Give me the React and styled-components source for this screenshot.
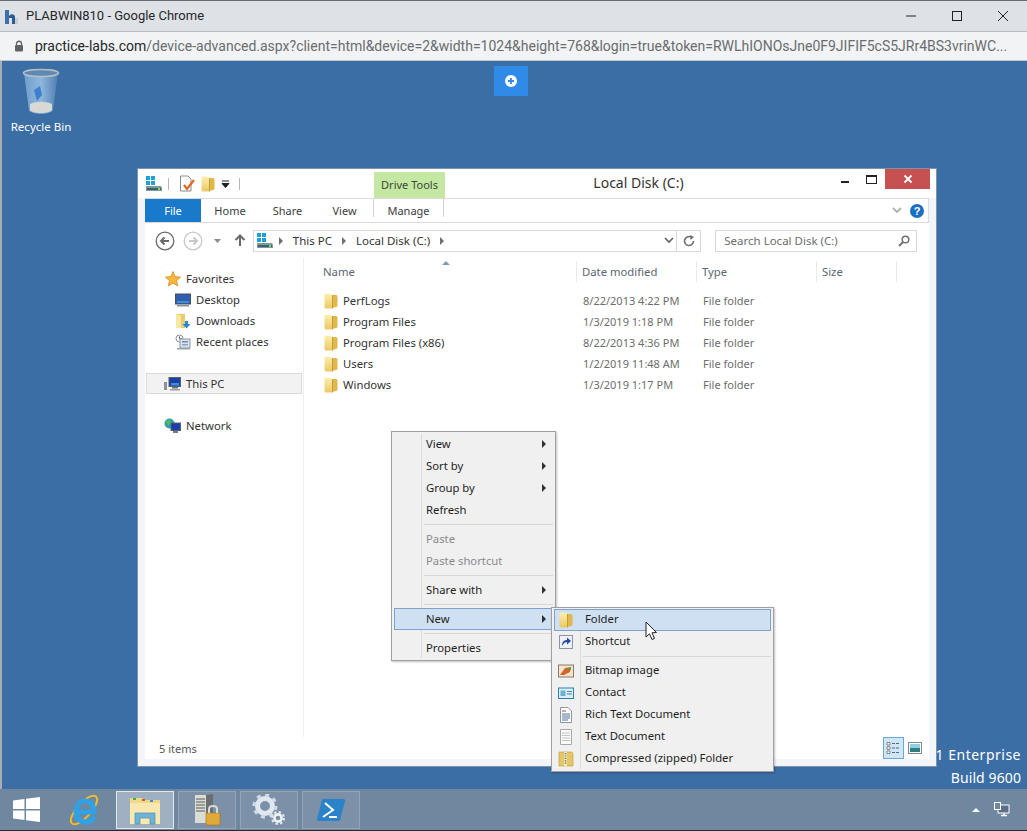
import styled, { createGlobalStyle } from "styled-components";

// Global styles

const GlobalStyle = createGlobalStyle`
    html, body {
        margin: 0;
        padding: 0;
        background: #ffffff;
        overflow: hidden;
    }
    * {
        box-sizing: border-box;
    }
`;

const FONT = `"Noto Sans", "Open Sans", sans-serif`;

// Browser chrome

const Page = styled.div`
    width: 1027px;
    height: 831px;
    display: flex;
    flex-direction: column;
    font-family: ${FONT};
    font-size: 12px;
    color: #2a2a2a;
    border-top: 1px solid #6a6d70;
`;

const BrowserTitleBar = styled.div`
    height: 31px;
    flex: none;
    background: #dee1e6;
    display: flex;
    align-items: center;
    padding-left: 4px;
    font-family: "Roboto", sans-serif;
    font-size: 13px;
    color: #26282b;
    gap: 6px;
    border-bottom: 1px solid #b9bcc0;
`;

const BrowserTitle = styled.span`
    flex: 1;
    padding-bottom: 2px;
`;

const BrowserControls = styled.div`
    display: flex;
    align-items: center;
    height: 100%;
    padding-right: 1px;
`;

const BrowserControl = styled.div`
    width: 46px;
    height: 100%;
    display: flex;
    align-items: center;
    justify-content: center;
`;

const UrlBar = styled.div`
    height: 29px;
    flex: none;
    background: #f1f3f4;
    display: flex;
    align-items: center;
    padding-left: 14px;
    gap: 11px;
    font-family: "Roboto", sans-serif;
    font-size: 14px;
    color: #6a6d70;
    white-space: nowrap;
    overflow: hidden;
    border-bottom: 1px solid #c4c6c8;
`;

const UrlHost = styled.span`
    color: #26282b;
`;

// Desktop

const Desktop = styled.div`
    flex: 1;
    position: relative;
    background: #3b6ea5;
    border-left: 2px solid #a9adb2;
`;

const RecycleBin = styled.div`
    position: absolute;
    left: 5px;
    top: 7px;
    width: 68px;
    display: flex;
    flex-direction: column;
    align-items: center;
    gap: 3px;
    color: #ffffff;
    font-size: 11.5px;
`;

const RemoteButton = styled.div`
    position: absolute;
    left: 492px;
    top: 5px;
    width: 34px;
    height: 30px;
    background: #2f8ae8;
    display: flex;
    align-items: center;
    justify-content: center;
`;

const Watermark = styled.div`
    position: absolute;
    right: 6px;
    bottom: 0;
    height: 46px;
    display: flex;
    flex-direction: column;
    align-items: flex-end;
    color: #ffffff;
    font-size: 14px;
    line-height: 23px;
`;

const WatermarkLine = styled.span`
    letter-spacing: ${(p) => p.$spacing}px;
`;

// Explorer window

const ExplorerWindow = styled.div`
    position: absolute;
    left: 135px;
    top: 107px;
    width: 800px;
    height: 599px;
    display: flex;
    flex-direction: column;
    background: #f2f6fb;
    border: 1px solid #7e93aa;
    padding: 0 7px 7px;
`;

const TitleRow = styled.div`
    height: 29px;
    flex: none;
    display: flex;
    align-items: flex-start;
    background: #ffffff;
    margin: 0 -7px;
    padding-left: 7px;
`;

const QuickAccess = styled.div`
    width: 229px;
    height: 100%;
    display: flex;
    align-items: center;
    gap: 5px;
`;

const QuickSep = styled.div`
    width: 1px;
    height: 12px;
    background: #b4b4b4;
    margin-left: ${(p) => p.$left || 0}px;
    margin-right: ${(p) => p.$right || 0}px;
`;

const DriveToolsLabel = styled.div`
    width: 71px;
    height: 26px;
    margin-top: 3px;
    padding-bottom: 2px;
    background: #c4e8a3;
    color: #3a4a30;
    font-size: 11px;
    display: flex;
    align-items: center;
    justify-content: center;
`;

const WindowTitle = styled.div`
    flex: 1;
    height: 100%;
    text-align: center;
    font-size: 14px;
    line-height: 27px;
    color: #333333;
`;

const WindowButtons = styled.div`
    display: flex;
    align-items: flex-start;
    height: 21px;
    padding-right: 6px;
`;

const WindowButton = styled.div`
    width: ${(p) => p.$width}px;
    height: 20px;
    display: flex;
    align-items: center;
    justify-content: center;
    background: ${(p) => p.$bg || "transparent"};
`;

const Ribbon = styled.div`
    height: 25px;
    flex: none;
    display: flex;
    align-items: stretch;
    background: #ffffff;
    border: 1px solid #dadbdc;
    border-left: none;
    position: relative;
`;

const FileTab = styled.div`
    width: 56px;
    background: #1979ca;
    color: #ffffff;
    font-size: 11px;
    display: flex;
    align-items: center;
    justify-content: center;
`;

const RibbonTab = styled.div`
    width: ${(p) => p.$width}px;
    display: flex;
    align-items: center;
    justify-content: center;
    font-size: 11px;
    color: #3c3c3c;
    ${(p) => p.$context && `
        border-left: 1px solid #d0d5cc;
        border-right: 1px solid #d0d5cc;
        margin-bottom: 6px;
        padding-top: 5px;
        height: 18px;
    `}
`;

const RibbonRight = styled.div`
    flex: 1;
    display: flex;
    align-items: center;
    justify-content: flex-end;
    gap: 8px;
    padding-right: 4px;
`;

const NavRow = styled.div`
    height: 35px;
    flex: none;
    display: flex;
    align-items: center;
    background: #ffffff;
    padding: 0 12px 0 10px;
`;

const NavButtons = styled.div`
    width: 98px;
    display: flex;
    align-items: center;
`;

const AddressBox = styled.div`
    width: 449px;
    height: 22px;
    display: flex;
    align-items: center;
    border: 1px solid #d9d9d9;
    padding-left: 2px;
    color: #333333;
    font-size: 11.5px;
`;

const Crumb = styled.span`
    margin: 0 10px;
`;

const AddressEnd = styled.div`
    margin-left: auto;
    display: flex;
    align-items: center;
    height: 100%;
`;

const AddressAction = styled.div`
    width: ${(p) => p.$width}px;
    height: 100%;
    display: flex;
    align-items: center;
    justify-content: center;
    border-left: ${(p) => (p.$divided ? "1px solid #d9d9d9" : "none")};
`;

const Caret = styled.span`
    width: 0;
    height: 0;
    margin-left: ${(p) => p.$left || 0}px;
    border-top: 4px solid transparent;
    border-bottom: 4px solid transparent;
    border-left: 4px solid #707070;
    display: inline-block;
    flex: none;
`;

const SearchBox = styled.div`
    width: 202px;
    height: 22px;
    margin-left: 14px;
    display: flex;
    align-items: center;
    justify-content: space-between;
    border: 1px solid #d9d9d9;
    padding: 0 6px 0 8px;
    color: #6d6d6d;
    font-size: 11.5px;
`;

const Body = styled.div`
    flex: 1;
    min-height: 0;
    display: flex;
    background: #ffffff;
`;

const NavPane = styled.div`
    width: 159px;
    flex: none;
    padding: 10px 1px 0;
    border-right: 1px solid #eeeeee;
`;

const TreeRow = styled.div`
    height: 21px;
    display: flex;
    align-items: center;
    gap: 5px;
    padding-left: ${(p) => p.$indent}px;
    color: #333333;
    font-size: 11.3px;
    margin-bottom: ${(p) => (p.$gap ? 21 : 0)}px;
    background: ${(p) => (p.$selected ? "#f2f2f2" : "transparent")};
    border: ${(p) => (p.$selected ? "1px solid #d9d9d9" : "none")};
`;

const FilePane = styled.div`
    flex: 1;
    min-width: 0;
    padding: 3px 0 0 14px;
`;

const COLUMNS = "259px 120px 120px 80px";

const HeaderRow = styled.div`
    height: 21px;
    display: grid;
    grid-template-columns: ${COLUMNS};
    margin-bottom: 8px;
    position: relative;
`;

const HeaderCell = styled.div`
    display: flex;
    align-items: center;
    padding-left: 5px;
    color: #5a6675;
    font-size: 11.3px;
    border-right: 1px solid #eaeaea;
`;

const SortArrow = styled.span`
    position: absolute;
    left: 124px;
    top: 0;
    width: 0;
    height: 0;
    border-left: 4px solid transparent;
    border-right: 4px solid transparent;
    border-bottom: 4px solid #7f9db9;
`;

const FileRow = styled.div`
    height: 21px;
    display: grid;
    grid-template-columns: ${COLUMNS};
    align-items: center;
`;

const FileName = styled.div`
    display: flex;
    align-items: center;
    gap: 4px;
    padding-left: 5px;
    color: #333333;
    font-size: 11.3px;
`;

const FileMeta = styled.div`
    padding-left: 6px;
    color: #6d6d6d;
    font-size: 11px;
`;

const StatusBar = styled.div`
    height: 22px;
    flex: none;
    background: #ffffff;
    display: flex;
    align-items: center;
    justify-content: space-between;
    padding: 0 4px 0 14px;
    font-size: 11px;
    color: #555555;
`;

const ViewToggles = styled.div`
    display: flex;
    align-items: center;
`;

const ViewToggle = styled.div`
    width: 21px;
    height: 22px;
    display: flex;
    align-items: center;
    justify-content: center;
    background: ${(p) => (p.$active ? "#cfe6f7" : "transparent")};
    border: 1px solid ${(p) => (p.$active ? "#6fa8d0" : "transparent")};
`;

// Context menus

const Menu = styled.div`
    position: absolute;
    left: ${(p) => p.$left}px;
    top: ${(p) => p.$top}px;
    width: ${(p) => p.$width}px;
    background: #f0f0f0;
    border: 1px solid #a0a0a0;
    padding: 1px 2px;
    box-shadow: 1px 1px 2px rgba(0, 0, 0, 0.25);
    font-size: 11.3px;
`;

const MenuGutter = styled.div`
    position: absolute;
    left: ${(p) => p.$left}px;
    top: 2px;
    bottom: 2px;
    width: 1px;
    background: #dcdcdc;
`;

const MenuItem = styled.div`
    position: relative;
    height: 22px;
    display: flex;
    align-items: center;
    padding-left: ${(p) => p.$indent}px;
    padding-bottom: ${(p) => (p.$sub ? 4 : 2)}px;
    color: ${(p) => (p.$disabled ? "#8a8a8a" : "#1f1f1f")};
    background: ${(p) => (p.$active ? "#cfe0f2" : "transparent")};
    outline: ${(p) => (p.$active ? "1px solid #7da2ce" : "none")};
    outline-offset: -1px;
`;

const MenuIcon = styled.span`
    position: absolute;
    left: 4px;
    top: 3px;
    width: 16px;
    height: 16px;
    display: flex;
`;

const MenuArrow = styled.span`
    position: absolute;
    right: 7px;
    top: 7px;
    width: 0;
    height: 0;
    border-top: 4px solid transparent;
    border-bottom: 4px solid transparent;
    border-left: 4px solid #303030;
`;

const MenuSep = styled.div`
    height: 7px;
    margin-left: ${(p) => p.$indent}px;
    display: flex;
    align-items: center;
    &::after {
        content: "";
        flex: 1;
        height: 1px;
        background: #d7d7d7;
    }
`;

const Pointer = styled.svg`
    position: absolute;
    left: 643px;
    top: 560px;
`;

// Taskbar

const Taskbar = styled.div`
    height: 42px;
    flex: none;
    background: #6f879f;
    display: flex;
    align-items: center;
    border-bottom: 1px solid #2a2a2a;
    padding: 0 0 0 2px;
`;

const StartArea = styled.div`
    width: 114px;
    display: flex;
    align-items: center;
    padding-left: 11px;
    gap: 28px;
`;

const TaskButton = styled.div`
    width: 58px;
    height: 38px;
    margin-right: 4px;
    display: flex;
    align-items: center;
    justify-content: center;
    background: ${(p) => (p.$active ? "#9fb0c1" : "#7c91a7")};
    border: 1px solid ${(p) => (p.$active ? "#e2e8ee" : "#92a4b7")};
`;

const Tray = styled.div`
    margin-left: auto;
    display: flex;
    align-items: center;
    gap: 14px;
    padding-right: 17px;
`;

const TrayUp = styled.span`
    width: 0;
    height: 0;
    border-left: 4px solid transparent;
    border-right: 4px solid transparent;
    border-bottom: 4px solid #ffffff;
`;

// Icons

function ChromeLogo() {
    return (
        <svg width="16" height="18" viewBox="0 0 16 18">
            <rect x="1" y="3" width="4" height="14" fill="#3f6fa8" />
            <path d="M5 9 C7 6 11 7 11 10 V17 H8 V11 H5 Z" fill="#2b5a94" />
            <rect x="11" y="11" width="3" height="6" fill="#c7ccd2" />
        </svg>
    );
}

function Folder() {
    return (
        <svg width="16" height="16" viewBox="0 0 16 16">
            <defs>
                <linearGradient id="folderFront" x1="0" y1="0" x2="0" y2="1">
                    <stop offset="0" stopColor="#fcefb0" />
                    <stop offset="1" stopColor="#ecc863" />
                </linearGradient>
            </defs>
            <path d="M9 2 H13 Q14.5 2 14.5 3.5 V12.5 Q14.5 14 13 14 L9 15 Z" fill="#e0b84b" />
            <path d="M1.5 2 Q1.5 0.5 3 0.5 H6.5 L9.5 2 V15.5 H3 Q1.5 15.5 1.5 14 Z" fill="url(#folderFront)" />
            <path d="M9.5 2 V15.5" stroke="#b8922f" strokeWidth="0.8" />
        </svg>
    );
}

function Drive() {
    return (
        <svg width="18" height="16" viewBox="0 0 18 16" style={{ flex: "none" }}>
            <rect x="1" y="0" width="4" height="4" fill="#1fa0d8" />
            <rect x="6" y="0" width="4" height="4" fill="#1fa0d8" />
            <rect x="1" y="5" width="4" height="4" fill="#1fa0d8" />
            <rect x="6" y="5" width="4" height="4" fill="#1fa0d8" />
            <path d="M1 10 H16 L17 12 V15 H1 Z" fill="#7f9a9e" />
            <rect x="2" y="12" width="14" height="2" fill="#3f5f6a" />
            <rect x="13" y="12" width="2" height="2" fill="#7fe06a" />
        </svg>
    );
}

function Star() {
    return (
        <svg width="16" height="16" viewBox="0 0 16 16">
            <path d="M8 0.5 L10.2 5.6 L15.6 6.1 L11.5 9.7 L12.8 15 L8 12.2 L3.2 15 L4.5 9.7 L0.4 6.1 L5.8 5.6 Z" fill="#f6b73c" stroke="#d98b2b" strokeWidth="0.8" />
        </svg>
    );
}

function Monitor() {
    return (
        <svg width="16" height="16" viewBox="0 0 16 16">
            <rect x="0.5" y="2" width="15" height="10" fill="#2f5fb0" stroke="#4a4f58" />
            <rect x="2" y="9" width="12" height="2" fill="#3f8fd8" />
            <rect x="2" y="13" width="12" height="1.5" fill="#8a9099" />
        </svg>
    );
}

function Downloads() {
    return (
        <svg width="16" height="16" viewBox="0 0 16 16">
            <path d="M1 1 H10 V15 H1 Z" fill="#eccb6d" />
            <path d="M1 1 L6 2.5 V15 L1 15 Z" fill="#f7e7a3" />
            <path d="M10 8 H13 V11 H15.5 L11.5 15.5 L7.5 11 H10 Z" fill="#2a86d6" />
        </svg>
    );
}

function RecentPlaces() {
    return (
        <svg width="16" height="16" viewBox="0 0 16 16">
            <circle cx="4.5" cy="4.5" r="3.5" fill="#ffffff" stroke="#8a8f96" />
            <path d="M4.5 2.5 V4.5 H6.5" stroke="#555555" fill="none" />
            <rect x="5" y="5" width="10" height="9" fill="#dbe3ec" stroke="#8a98a8" />
            <rect x="7" y="7" width="6" height="1.5" fill="#6f8fb0" />
            <rect x="7" y="10" width="6" height="1.5" fill="#8fa6bd" />
            <rect x="2" y="14" width="13" height="1.5" fill="#9aa3ad" />
        </svg>
    );
}

function ThisPC() {
    return (
        <svg width="17" height="14" viewBox="0 0 17 14">
            <rect x="0" y="5" width="3" height="8" fill="#8c929a" />
            <rect x="5" y="0.5" width="11.5" height="9" fill="#1a3fa8" stroke="#5a6068" />
            <rect x="7" y="6" width="8" height="2.5" fill="#3f8fd8" />
            <rect x="8" y="10" width="6" height="1.5" fill="#6a7078" />
            <rect x="6" y="12" width="10" height="1.5" fill="#9aa0a8" />
        </svg>
    );
}

function Network() {
    return (
        <svg width="17" height="16" viewBox="0 0 17 16">
            <circle cx="5.5" cy="5.5" r="5" fill="#2c9fb4" />
            <path d="M2 3 L6 2 L7 5 L4 8 Z" fill="#62b84f" />
            <rect x="7" y="5" width="9.5" height="7.5" fill="#1a3fa8" stroke="#5a6068" />
            <rect x="9" y="13" width="5" height="2" fill="#757b83" />
        </svg>
    );
}

function CheckDoc() {
    return (
        <svg width="16" height="17" viewBox="0 0 16 17">
            <path d="M1.5 1 H9 L12 4 V16 H1.5 Z" fill="#ffffff" stroke="#8a8a8a" />
            <path d="M5 10 L8 14 L15 5" stroke="#e0662a" strokeWidth="2.2" fill="none" />
        </svg>
    );
}

function ChromeButtonGlyph({ kind }) {
    if (kind === "min") {
        return <svg width="12" height="12"><path d="M1 6 H11" stroke="#222" /></svg>;
    }
    if (kind === "max") {
        return <svg width="12" height="12"><rect x="1.5" y="1.5" width="9" height="9" fill="none" stroke="#222" /></svg>;
    }
    return <svg width="12" height="12"><path d="M1 1 L11 11 M11 1 L1 11" stroke="#222" /></svg>;
}

function RecycleBinIcon() {
    return (
        <svg width="38" height="48" viewBox="0 0 38 48">
            <defs>
                <linearGradient id="binGlass" x1="0" y1="0" x2="1" y2="0">
                    <stop offset="0" stopColor="#6f9fcc" />
                    <stop offset="0.5" stopColor="#8fb7dc" />
                    <stop offset="1" stopColor="#4f7fb0" />
                </linearGradient>
            </defs>
            <path d="M2 5 L7 42 C8 47 30 47 31 42 L36 5 Z" fill="url(#binGlass)" />
            <path d="M8 36 C14 33 24 33 30 36 L30 42 C28 46 10 46 8 42 Z" fill="#d8d8d4" />
            <path d="M12 22 L18 18 L20 27 L15 33 Z" fill="#3f7fd0" />
            <ellipse cx="19" cy="5" rx="17.5" ry="3.5" fill="#5f89b2" stroke="#b5bec7" strokeWidth="1.5" />
        </svg>
    );
}

function RoundArrow({ direction, faded }) {
    const color = faded ? "#c8c8c8" : "#6a6a6a";
    const d = direction === "left" ? "M14 10 H6 M9.5 6.5 L6 10 L9.5 13.5" : "M6 10 H14 M10.5 6.5 L14 10 L10.5 13.5";
    return (
        <svg width="20" height="20" viewBox="0 0 20 20">
            <circle cx="10" cy="10" r="8.8" fill="#ffffff" stroke={color} strokeWidth="1.3" />
            <path d={d} fill="none" stroke={color} strokeWidth="2" />
        </svg>
    );
}

function Shortcut() {
    return (
        <svg width="16" height="16" viewBox="0 0 16 16">
            <rect x="1.5" y="1.5" width="13" height="13" fill="#eef2f8" stroke="#8a93a8" />
            <path d="M4 12 C4 8 6 6 9 6 V3.5 L13 7 L9 10.5 V8 C7 8 5.5 9.5 4 12 Z" fill="#2348a8" />
        </svg>
    );
}

function Bitmap() {
    return (
        <svg width="16" height="16" viewBox="0 0 16 16">
            <rect x="0.5" y="2" width="15" height="12" fill="#f2e4d0" stroke="#8a7a68" />
            <path d="M2 12 L7 5 L13 4 L12 9 L6 12 Z" fill="#d9622b" />
            <path d="M8 6 L13 4 L13 7 Z" fill="#4fa04f" />
        </svg>
    );
}

function Contact() {
    return (
        <svg width="16" height="16" viewBox="0 0 16 16">
            <rect x="0.5" y="3" width="15" height="10.5" fill="#d8eef8" stroke="#2f7fa8" />
            <rect x="2.5" y="5.5" width="5" height="5.5" fill="#6fb0d0" />
            <path d="M9 6.5 H14 M9 9 H14" stroke="#5a7f98" />
        </svg>
    );
}

function RichText() {
    return (
        <svg width="16" height="16" viewBox="0 0 16 16">
            <path d="M2.5 0.5 H10 L13.5 4 V15.5 H2.5 Z" fill="#ffffff" stroke="#8c96a6" />
            <path d="M4 4 H8" stroke="#c04040" />
            <path d="M4 7 H12 M4 9 H12 M4 11 H12 M4 13 H10" stroke="#4f6f9a" />
        </svg>
    );
}

function TextDoc() {
    return (
        <svg width="16" height="16" viewBox="0 0 16 16">
            <path d="M2.5 0.5 H13.5 V15.5 H2.5 Z" fill="#fbfbfb" stroke="#a8a8a8" />
            <path d="M4 4 H12 M4 6.5 H12 M4 9 H12 M4 11.5 H12" stroke="#c4c4c4" />
        </svg>
    );
}

function Zipped() {
    return (
        <svg width="16" height="16" viewBox="0 0 16 16">
            <path d="M1 1 H14 L15 3 V15 H1 Z" fill="#e6c766" stroke="#b99a3c" strokeWidth="0.6" />
            <rect x="6" y="1" width="3" height="14" fill="#f6ecc0" />
            <path d="M7.5 2 V14" stroke="#6a6a6a" strokeDasharray="1.2 1.2" strokeWidth="1.6" />
        </svg>
    );
}

function WindowsLogo() {
    return (
        <svg width="27" height="25" viewBox="0 0 27 25">
            <path d="M0 3.6 L11.5 2 V12 H0 Z M13 1.8 L27 0 V12 H13 Z M0 13.4 H11.5 V23 L0 21.4 Z M13 13.4 H27 V25 L13 23.2 Z" fill="#ffffff" />
        </svg>
    );
}

function IELogo() {
    return (
        <svg width="32" height="34" viewBox="0 0 32 34">
            <ellipse cx="16" cy="17" rx="18" ry="7" transform="rotate(-48 16 17)" fill="none" stroke="#f0bb2c" strokeWidth="2" />
            <path d="M7 19 H26 C26 11 21.5 8 17 8 C11.5 8 8 13 8 19 C8 25 12 29 17.5 29 C21.5 29 24.5 27 26 23.5" fill="none" stroke="#2fa2e6" strokeWidth="5" />
        </svg>
    );
}

function ExplorerLogo() {
    return (
        <svg width="32" height="30" viewBox="0 0 32 30">
            <path d="M1 3 H13 L15 5 H31 V29 H1 Z" fill="#f0d888" />
            <path d="M1 8 H31 V29 H1 Z" fill="#f8e8b0" />
            <rect x="4" y="3" width="3" height="2" fill="#45b045" />
            <rect x="13" y="4" width="3" height="2" fill="#d65a2a" />
            <rect x="21" y="5" width="3" height="2" fill="#3f8fd8" />
            <path d="M6 29 V18 H26 V29 H21 V23 H11 V29 Z" fill="#6fb3d8" stroke="#4a8fb8" strokeWidth="0.7" />
        </svg>
    );
}

function ServerLogo() {
    return (
        <svg width="28" height="34" viewBox="0 0 28 34">
            <path d="M2 2 H13 V30 H2 Z" fill="#dcdcd6" />
            <path d="M13 2 L20 1 V29 L13 30 Z" fill="#6a6f74" />
            <path d="M3 6 H12 M3 9 H12 M3 12 H12 M3 15 H12 M3 18 H12" stroke="#5a5a5a" />
            <rect x="13" y="20" width="14" height="12" fill="#e0aa3a" stroke="#a87a20" strokeWidth="0.7" />
            <path d="M16 20 V16 C16 12 24 12 24 16 V20" fill="none" stroke="#d8d8d8" strokeWidth="2" />
        </svg>
    );
}

function GearsLogo() {
    return (
        <svg width="34" height="32" viewBox="0 0 34 32">
            <circle cx="13" cy="12" r="7.5" fill="none" stroke="#dfe8f0" strokeWidth="5" />
            <circle cx="13" cy="12" r="11" fill="none" stroke="#cfdbe6" strokeWidth="3" strokeDasharray="4 4.6" />
            <circle cx="26" cy="24" r="3.6" fill="none" stroke="#eef2f5" strokeWidth="2.6" />
            <circle cx="26" cy="24" r="6" fill="none" stroke="#e6ebf0" strokeWidth="2" strokeDasharray="2.4 2.3" />
        </svg>
    );
}

function PowerShellLogo() {
    return (
        <svg width="28" height="24" viewBox="0 0 28 24">
            <path d="M6 1 H27 C28 1 28 2 28 3 L23 22 C23 23 22 23 21 23 H1 C0 23 0 22 0 21 L5 2 C5 1 5 1 6 1 Z" fill="#2a82c8" />
            <path d="M8 5 L16 12 L6 19 M12 19 H20" fill="none" stroke="#ffffff" strokeWidth="2" />
        </svg>
    );
}

const files = [
    { name: "PerfLogs", date: "8/22/2013 4:22 PM" },
    { name: "Program Files", date: "1/3/2019 1:18 PM" },
    { name: "Program Files (x86)", date: "8/22/2013 4:36 PM" },
    { name: "Users", date: "1/2/2019 11:48 AM" },
    { name: "Windows", date: "1/3/2019 1:17 PM" },
];

const newItems = [
    { label: "Bitmap image", icon: <Bitmap /> },
    { label: "Contact", icon: <Contact /> },
    { label: "Rich Text Document", icon: <RichText /> },
    { label: "Text Document", icon: <TextDoc /> },
    { label: "Compressed (zipped) Folder", icon: <Zipped /> },
];

function App() {
    return (
        <Page>
            <GlobalStyle />

            <BrowserTitleBar>
                <ChromeLogo />
                <BrowserTitle>PLABWIN810 - Google Chrome</BrowserTitle>
                <BrowserControls>
                    <BrowserControl><ChromeButtonGlyph kind="min" /></BrowserControl>
                    <BrowserControl><ChromeButtonGlyph kind="max" /></BrowserControl>
                    <BrowserControl><ChromeButtonGlyph kind="close" /></BrowserControl>
                </BrowserControls>
            </BrowserTitleBar>

            <UrlBar>
                <svg width="10" height="12" viewBox="0 0 10 12">
                    <path d="M2.5 5 V3.5 C2.5 0.5 7.5 0.5 7.5 3.5 V5" fill="none" stroke="#5f6368" strokeWidth="1.3" />
                    <rect x="1" y="5" width="8" height="6.5" rx="1" fill="#5f6368" />
                </svg>
                <span>
                    <UrlHost>practice-labs.com</UrlHost>/device-advanced.aspx?client=html&amp;device=2&amp;width=1024&amp;height=768&amp;login=true&amp;token=RWLhIONOsJne0F9JIFIF5cS5JRr4BS3vrinWC...
                </span>
            </UrlBar>

            <Desktop>
                <RecycleBin>
                    <RecycleBinIcon />
                    <span>Recycle Bin</span>
                </RecycleBin>

                <RemoteButton>
                    <svg width="12" height="12" viewBox="0 0 12 12">
                        <circle cx="6" cy="6" r="6" fill="#ffffff" />
                        <path d="M6 3 V9 M3 6 H9" stroke="#2f8ae8" strokeWidth="1.8" />
                    </svg>
                </RemoteButton>

                <Watermark>
                    <WatermarkLine $spacing={0.5}>8.1 Enterprise</WatermarkLine>
                    <WatermarkLine $spacing={0.1}>Build 9600</WatermarkLine>
                </Watermark>

                <ExplorerWindow>
                    <TitleRow>
                        <QuickAccess>
                            <Drive />
                            <QuickSep $right={5} />
                            <CheckDoc />
                            <Folder />
                            <svg width="9" height="8" viewBox="0 0 9 8">
                                <path d="M1 1 H8 M1 3.5 H8 L4.5 7.5 Z" stroke="#222" fill="#222" />
                            </svg>
                            <QuickSep $left={4} />
                        </QuickAccess>
                        <DriveToolsLabel>Drive Tools</DriveToolsLabel>
                        <WindowTitle>Local Disk (C:)</WindowTitle>
                        <WindowButtons>
                            <WindowButton $width={21}>
                                <svg width="8" height="2" style={{ marginLeft: 5, marginTop: 5 }}><rect width="8" height="2" fill="#222" /></svg>
                            </WindowButton>
                            <WindowButton $width={32}>
                                <svg width="11" height="9" style={{ marginLeft: 5 }}>
                                    <rect x="0.5" y="0.5" width="10" height="8" fill="none" stroke="#222" />
                                    <rect x="0" y="0" width="11" height="2" fill="#222" />
                                </svg>
                            </WindowButton>
                            <WindowButton $width={45} $bg="#c75050">
                                <svg width="10" height="10"><path d="M1.5 1.5 L8.5 8.5 M8.5 1.5 L1.5 8.5" stroke="#fff" strokeWidth="1.8" /></svg>
                            </WindowButton>
                        </WindowButtons>
                    </TitleRow>

                    <Ribbon>
                        <FileTab>File</FileTab>
                        <RibbonTab $width={58}>Home</RibbonTab>
                        <RibbonTab $width={57}>Share</RibbonTab>
                        <RibbonTab $width={57}>View</RibbonTab>
                        <RibbonTab $width={71} $context>Manage</RibbonTab>
                        <RibbonRight>
                            <svg width="10" height="7" viewBox="0 0 10 7">
                                <path d="M1 1 L5 5 L9 1" fill="none" stroke="#b0b0b0" strokeWidth="1.8" />
                            </svg>
                            <svg width="14" height="14" viewBox="0 0 14 14">
                                <circle cx="7" cy="7" r="7" fill="#1a6fc0" />
                                <text x="7" y="11" textAnchor="middle" fontSize="11" fontWeight="700" fill="#ffffff" fontFamily="Liberation Sans">?</text>
                            </svg>
                        </RibbonRight>
                    </Ribbon>

                    <NavRow>
                        <NavButtons>
                            <RoundArrow direction="left" />
                            <span style={{ width: 8 }} />
                            <RoundArrow direction="right" faded />
                            <svg width="9" height="6" viewBox="0 0 9 6" style={{ margin: "0 12px 0 10px" }}>
                                <path d="M1 1 H8 L4.5 5 Z" fill="#8a8a8a" />
                            </svg>
                            <svg width="12" height="13" viewBox="0 0 12 13">
                                <path d="M6 12 V2 M1.5 6 L6 1.5 L10.5 6" fill="none" stroke="#6a6a6a" strokeWidth="2" />
                            </svg>
                        </NavButtons>
                        <AddressBox>
                            <Drive />
                            <Caret $left={5} />
                            <Crumb>This PC</Crumb>
                            <Caret />
                            <Crumb>Local Disk (C:)</Crumb>
                            <Caret />
                            <AddressEnd>
                                <AddressAction $width={15}>
                                    <svg width="10" height="7" viewBox="0 0 10 7">
                                        <path d="M1 1 L5 5 L9 1" fill="none" stroke="#606060" strokeWidth="1.6" />
                                    </svg>
                                </AddressAction>
                                <AddressAction $width={24} $divided>
                                    <svg width="12" height="12" viewBox="0 0 12 12">
                                        <path d="M10.5 6 A4.5 4.5 0 1 1 8 2" fill="none" stroke="#707070" strokeWidth="1.6" />
                                        <path d="M7 0 L11 2 L7.5 5 Z" fill="#707070" />
                                    </svg>
                                </AddressAction>
                            </AddressEnd>
                        </AddressBox>
                        <SearchBox>
                            <span>Search Local Disk (C:)</span>
                            <svg width="12" height="12" viewBox="0 0 12 12">
                                <circle cx="7.5" cy="4.5" r="3.3" fill="none" stroke="#707070" strokeWidth="1.5" />
                                <path d="M5 7 L1 11" stroke="#707070" strokeWidth="2" />
                            </svg>
                        </SearchBox>
                    </NavRow>

                    <Body>
                        <NavPane>
                            <TreeRow $indent={19}><Star />Favorites</TreeRow>
                            <TreeRow $indent={29}><Monitor />Desktop</TreeRow>
                            <TreeRow $indent={29}><Downloads />Downloads</TreeRow>
                            <TreeRow $indent={29} $gap><RecentPlaces />Recent places</TreeRow>
                            <TreeRow $indent={17} $selected $gap><ThisPC />This PC</TreeRow>
                            <TreeRow $indent={18}><Network />Network</TreeRow>
                        </NavPane>

                        <FilePane>
                            <HeaderRow>
                                <HeaderCell>Name</HeaderCell>
                                <SortArrow />
                                <HeaderCell>Date modified</HeaderCell>
                                <HeaderCell>Type</HeaderCell>
                                <HeaderCell>Size</HeaderCell>
                            </HeaderRow>
                            {files.map((file) => (
                                <FileRow key={file.name}>
                                    <FileName><Folder />{file.name}</FileName>
                                    <FileMeta>{file.date}</FileMeta>
                                    <FileMeta>File folder</FileMeta>
                                    <FileMeta />
                                </FileRow>
                            ))}
                        </FilePane>
                    </Body>

                    <StatusBar>
                        <span>5 items</span>
                        <ViewToggles>
                            <ViewToggle $active>
                                <svg width="15" height="14" viewBox="0 0 15 14">
                                    <path d="M1 1.5 H4 V4 H1 Z M1 5.8 H4 V8.3 H1 Z M1 10 H4 V12.5 H1 Z" fill="#ffffff" stroke="#5a5a5a" strokeWidth="0.7" />
                                    <path d="M6 2.5 H14 M6 7 H14 M6 11.5 H14" stroke="#5a6a7a" strokeDasharray="3 1" />
                                </svg>
                            </ViewToggle>
                            <ViewToggle>
                                <svg width="14" height="12" viewBox="0 0 14 12">
                                    <rect x="0.5" y="0.5" width="13" height="11" fill="#ffffff" stroke="#7a8a96" />
                                    <rect x="2" y="2" width="10" height="4" fill="#8fd0e0" />
                                    <rect x="2" y="6" width="10" height="4" fill="#2f7f80" />
                                </svg>
                            </ViewToggle>
                        </ViewToggles>
                    </StatusBar>
                </ExplorerWindow>

                <Menu $left={389} $top={370} $width={165}>
                    <MenuGutter $left={29} />
                    <MenuItem $indent={32}>View<MenuArrow /></MenuItem>
                    <MenuItem $indent={32}>Sort by<MenuArrow /></MenuItem>
                    <MenuItem $indent={32}>Group by<MenuArrow /></MenuItem>
                    <MenuItem $indent={32}>Refresh</MenuItem>
                    <MenuSep $indent={30} />
                    <MenuItem $indent={32} $disabled>Paste</MenuItem>
                    <MenuItem $indent={32} $disabled>Paste shortcut</MenuItem>
                    <MenuSep $indent={30} />
                    <MenuItem $indent={32}>Share with<MenuArrow /></MenuItem>
                    <MenuSep $indent={30} />
                    <MenuItem $indent={32} $active>New<MenuArrow /></MenuItem>
                    <MenuSep $indent={30} />
                    <MenuItem $indent={32}>Properties</MenuItem>
                </Menu>

                <Menu $left={549} $top={546} $width={223}>
                    <MenuGutter $left={28} />
                    <MenuItem $indent={31} $sub $active><MenuIcon><Folder /></MenuIcon>Folder</MenuItem>
                    <MenuItem $indent={31} $sub><MenuIcon><Shortcut /></MenuIcon>Shortcut</MenuItem>
                    <MenuSep $indent={29} />
                    {newItems.map((item) => (
                        <MenuItem $indent={31} $sub key={item.label}>
                            <MenuIcon>{item.icon}</MenuIcon>{item.label}
                        </MenuItem>
                    ))}
                </Menu>

                <Pointer width="13" height="20" viewBox="0 0 13 20">
                    <path d="M1 1 V16 L4.5 12.8 L7 18.5 L9.5 17.4 L7 11.8 L11.5 11.5 Z" fill="#ffffff" stroke="#222222" strokeWidth="1" />
                </Pointer>
            </Desktop>

            <Taskbar>
                <StartArea>
                    <WindowsLogo />
                    <IELogo />
                </StartArea>
                <TaskButton $active><ExplorerLogo /></TaskButton>
                <TaskButton><ServerLogo /></TaskButton>
                <TaskButton><GearsLogo /></TaskButton>
                <TaskButton><PowerShellLogo /></TaskButton>
                <Tray>
                    <TrayUp />
                    <svg width="16" height="16" viewBox="0 0 16 16">
                        <rect x="4" y="3" width="11" height="8" fill="#5b7088" stroke="#ffffff" />
                        <rect x="0.5" y="0.5" width="6" height="7" fill="#6f879f" stroke="#ffffff" />
                        <path d="M7 13.5 H13 M10 11 V14" stroke="#ffffff" strokeWidth="1.3" />
                    </svg>
                </Tray>
            </Taskbar>
        </Page>
    );
}

export default App;
